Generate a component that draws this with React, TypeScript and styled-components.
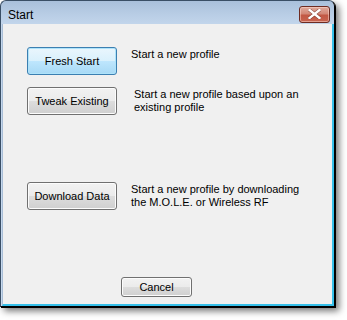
import React from "react";
import styled, { createGlobalStyle } from "styled-components";

const Global = createGlobalStyle`
  html, body { margin: 0; padding: 0; background: #ffffff; }
  body { width: 347px; height: 320px; overflow: hidden; }
`;

const Window = styled.div`
  position: relative;
  width: 335px;
  height: 307px;
  box-sizing: border-box;
  border: 1px solid #3a4f66;
  border-right-color: #000;
  border-bottom-color: #000;
  border-radius: 6px 6px 0 0;
  background: linear-gradient(#a9c0db 0px, #b7cce4 12px, #c3d6ec 24px, #c8daee 100%);
  box-shadow: 4px 4px 7px rgba(0, 0, 0, 0.55), 1px 1px 0 #000;
  display: flex;
  flex-direction: column;
  font-family: "Liberation Sans", Arial, sans-serif;
`;

const TitleBar = styled.div`
  height: 23px;
  display: flex;
  align-items: center;
  justify-content: space-between;
  padding: 0 4px 0 7px;
  flex-shrink: 0;
`;

const Title = styled.span`
  font-size: 12px;
  color: #000;
  padding-top: 4px;
`;

const CloseButton = styled.div`
  width: 31px;
  height: 17px;
  box-sizing: border-box;
  margin-top: 3px;
  border: 1px solid #6e2c22;
  border-radius: 3px;
  background: linear-gradient(#e0aa9c 0%, #d38776 45%, #c25844 55%, #c86450 100%);
  box-shadow: inset 0 0 0 1px rgba(255, 220, 210, 0.5);
  display: flex;
  align-items: center;
  justify-content: center;
`;

const Client = styled.div`
  flex: 1;
  margin: 0 0 0 1px;
  background: #f0f0f0;
  border-right: 2px solid #36c0ea;
  border-bottom: 2px solid #36c0ea;
  border-left: 1px solid #a8bdd6;
  display: flex;
  flex-direction: column;
  padding: 23px 0 7px 24px;
`;

const Row = styled.div<{ $gap: number; $top: number }>`
  display: flex;
  align-items: flex-start;
  gap: ${(p) => p.$gap}px;
  margin-top: ${(p) => p.$top}px;
`;

const Button = styled.button<{ $hot?: boolean; $w?: number; $h?: number }>`
  width: ${(p) => p.$w ?? 90}px;
  height: ${(p) => p.$h ?? 28}px;
  flex-shrink: 0;
  box-sizing: border-box;
  border: 1px solid ${(p) => (p.$hot ? "#3c7fb1" : "#707070")};
  border-radius: 3px;
  padding: 0;
  font-family: "Liberation Sans", Arial, sans-serif;
  font-size: 11px;
  color: #000;
  background: ${(p) =>
    p.$hot
      ? "linear-gradient(#eaf6fd 0%, #d9f0fc 50%, #bee6fd 51%, #a7d9f5 100%)"
      : "linear-gradient(#f2f2f2 0%, #ebebeb 50%, #dddddd 51%, #cfcfcf 100%)"};
  box-shadow: ${(p) =>
    p.$hot ? "inset 0 0 0 1px #aee3fa" : "inset 0 0 0 1px #fcfcfc"};
`;

const Desc = styled.div<{ $top: number }>`
  font-size: 11px;
  line-height: 13px;
  color: #000;
  margin-top: ${(p) => p.$top}px;
`;

const Footer = styled.div`
  margin-top: auto;
  display: flex;
  padding-left: 94px;
`;

export default function App() {
  return (
    <>
      <Global />
      <Window>
        <TitleBar>
          <Title>Start</Title>
          <CloseButton>
            <svg width="13" height="10" viewBox="0 0 13 10">
              <path
                d="M1.5 1 L11.5 9 M11.5 1 L1.5 9"
                stroke="#5a2018"
                strokeWidth="3.6"
                strokeLinecap="square"
                opacity="0.55"
              />
              <path
                d="M1.5 1 L11.5 9 M11.5 1 L1.5 9"
                stroke="#ffffff"
                strokeWidth="2.4"
                strokeLinecap="square"
              />
            </svg>
          </CloseButton>
        </TitleBar>
        <Client>
          <Row $gap={14} $top={0}>
            <Button $hot>Fresh Start</Button>
            <Desc $top={1}>Start a new profile</Desc>
          </Row>
          <Row $gap={17} $top={12}>
            <Button>Tweak Existing</Button>
            <Desc $top={1}>
              Start a new profile based upon an
              <br />
              existing profile
            </Desc>
          </Row>
          <Row $gap={14} $top={67}>
            <Button>Download Data</Button>
            <Desc $top={1}>
              Start a new profile by downloading
              <br />
              the M.O.L.E. or Wireless RF
            </Desc>
          </Row>
          <Footer>
            <Button $w={71} $h={20}>
              Cancel
            </Button>
          </Footer>
        </Client>
      </Window>
    </>
  );
}
